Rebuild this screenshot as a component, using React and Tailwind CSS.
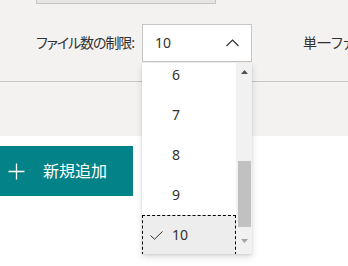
import React from "react";

const items = ["6", "7", "8", "9", "10"];

export default function App() {
  return (
    <div
      className="relative w-[348px] h-[266px] overflow-hidden bg-white text-[#323130] [font-feature-settings:'palt']"
      style={{ fontFamily: '"Noto Sans", "Noto Sans CJK JP", sans-serif' }}
    >
      <div className="h-[136px] bg-[#f3f2f1] flex flex-col">
        <div className="ml-[36px] w-[180px] h-[4px] border border-t-0 border-[#c8c6c4] bg-[#e6e5e4]" />
        <div className="mt-[20px] h-[38px] flex items-center">
          <div className="shrink-0 ml-[36px] w-[106px] text-[14px] leading-none whitespace-nowrap tracking-[-1.1px]">ファイル数の制限:</div>
          <div className="shrink-0 w-[110px] h-[38px] bg-white border border-[#c8c6c4] flex items-center justify-between pl-[12px] pr-[12px]">
            <span className="text-[14px] leading-none">10</span>
            <svg width="13" height="8" viewBox="0 0 13 8" fill="none">
              <polyline points="0.5,7 6.5,1 12.5,7" stroke="#323130" strokeWidth="1.2" />
            </svg>
          </div>
          <div className="shrink-0 ml-[51px] text-[14px] leading-none whitespace-nowrap">単一ファイルのサイズ</div>
        </div>
        <div className="mt-[19px] h-px bg-[#c8c6c4]" />
      </div>
      <div className="mt-[10px] w-[133px] h-[50px] bg-[#038387] flex items-center text-white">
        <svg className="ml-[8px]" width="17" height="17" viewBox="0 0 17 17" fill="none">
          <path d="M8.5 0.5V16.5M0.5 8.5H16.5" stroke="white" strokeWidth="1.3" />
        </svg>
        <span className="ml-[18px] text-[16px] leading-none">新規追加</span>
      </div>

      <div className="absolute left-[142px] top-[63px] w-[110px] h-[191px] bg-white flex shadow-[0_3px_7px_rgba(0,0,0,0.13),0_1px_2px_rgba(0,0,0,0.1)]">
        <div className="flex-1 overflow-hidden">
          <div className="mt-[-8px] flex flex-col">
            {items.map((it) => {
              const sel = it === "10";
              return (
                <div
                  key={it}
                  className={
                    sel
                      ? "h-[40px] flex items-center bg-[#ededed] border border-dashed border-black"
                      : "h-[40px] flex items-center border border-transparent"
                  }
                >
                  {sel ? (
                    <svg className="ml-[7px]" width="13" height="9" viewBox="0 0 13 9" fill="none">
                      <polyline points="0.5,4.5 4.5,8.2 12.5,0.5" stroke="#323130" strokeWidth="1" />
                    </svg>
                  ) : null}
                  <span className={sel ? "ml-[9px] text-[14px] leading-none" : "ml-[29px] text-[14px] leading-none"}>{it}</span>
                </div>
              );
            })}
          </div>
        </div>
        <div className="w-[16px] bg-[#f1f1f1] flex flex-col items-center">
          <div className="h-[17px] flex items-center justify-center">
            <svg width="7" height="4" viewBox="0 0 7 4"><polygon points="0,4 3.5,0 7,4" fill="#505050" /></svg>
          </div>
          <div className="mt-[81px] w-[13px] h-[66px] bg-[#c1c1c1]" />
          <div className="h-[27px] flex items-center justify-center">
            <svg width="7" height="4" viewBox="0 0 7 4"><polygon points="0,0 3.5,4 7,0" fill="#a3a3a3" /></svg>
          </div>
        </div>
      </div>
    </div>
  );
}
